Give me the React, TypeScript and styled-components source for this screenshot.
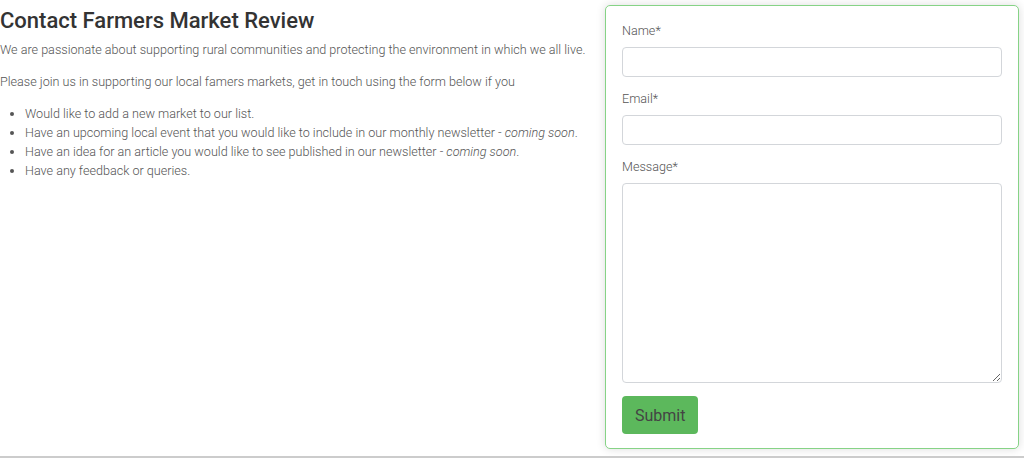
import styled, { createGlobalStyle } from "styled-components";

const GlobalStyle = createGlobalStyle`
    html, body {
        margin: 0;
        padding: 0;
        background: #ffffff;
    }
    body {
        font-family: Roboto, "Liberation Sans", Arial, sans-serif;
        font-weight: 300;
        color: #555555;
    }
`;

const Page = styled.div`
    width: 1024px;
    height: 458px;
    display: flex;
    flex-direction: column;
    overflow: hidden;
`;

const Row = styled.div`
    display: flex;
    height: 456px;
    padding: 5px 5px 0 0;
    box-sizing: border-box;
    gap: 10px;
`;

const Intro = styled.section`
    flex: 1;
    margin-top: -5px;
`;

const Heading = styled.h1`
    margin: 8px 0 6px;
    font-size: 22px;
    line-height: 1.2;
    font-weight: 500;
    color: #333333;
`;

const Text = styled.p`
    margin: 0 0 13px;
    font-size: 12.6px;
    line-height: 19px;
`;

const List = styled.ul`
    margin: 0;
    padding-left: 25px;
    font-size: 12.6px;
    line-height: 19px;
`;

const Card = styled.form`
    width: 414px;
    height: 444px;
    box-sizing: border-box;
    padding: 16px;
    border: 1px solid #86d386;
    border-radius: 5px;
    box-shadow: 0 0 10px rgba(0, 0, 0, 0.14);
    background: #ffffff;
`;

const Group = styled.div`
    margin-bottom: 13px;
`;

const Label = styled.label`
    display: block;
    margin: 0 0 7px;
    font-size: 12.6px;
    line-height: 18px;
    color: #555555;
`;

const Field = styled.input`
    display: block;
    width: 100%;
    height: 30px;
    box-sizing: border-box;
    border: 1px solid #d3d6da;
    border-radius: 4px;
    background: #ffffff;
    font: inherit;
`;

const Area = styled.textarea`
    display: block;
    width: 100%;
    height: 200px;
    box-sizing: border-box;
    border: 1px solid #d3d6da;
    border-radius: 4px;
    background: #ffffff;
    font: inherit;
    resize: vertical;
`;

const Submit = styled.button`
    height: 38px;
    padding: 0 13px;
    border: none;
    border-radius: 4px;
    background: #5cb85c;
    color: #444444;
    font-family: Roboto, "Liberation Sans", Arial, sans-serif;
    font-size: 16px;
    font-weight: 400;
`;

const Footer = styled.div`
    height: 2px;
    background: #cccccc;
`;

export default function App() {
    return (
        <Page>
            <GlobalStyle />
            <Row>
                <Intro>
                    <Heading>Contact Farmers Market Review</Heading>
                    <Text>
                        We are passionate about supporting rural communities and protecting the
                        environment in which we all live.
                    </Text>
                    <Text>
                        Please join us in supporting our local famers markets, get in touch using
                        the form below if you
                    </Text>
                    <List>
                        <li>Would like to add a new market to our list.</li>
                        <li>
                            Have an upcoming local event that you would like to include in our
                            monthly newsletter - <em>coming soon</em>.
                        </li>
                        <li>
                            Have an idea for an article you would like to see published in our
                            newsletter - <em>coming soon</em>.
                        </li>
                        <li>Have any feedback or queries.</li>
                    </List>
                </Intro>
                <Card onSubmit={(e) => e.preventDefault()}>
                    <Group>
                        <Label htmlFor="name">Name*</Label>
                        <Field id="name" type="text" />
                    </Group>
                    <Group>
                        <Label htmlFor="email">Email*</Label>
                        <Field id="email" type="email" />
                    </Group>
                    <Group>
                        <Label htmlFor="message">Message*</Label>
                        <Area id="message" />
                    </Group>
                    <Submit type="submit">Submit</Submit>
                </Card>
            </Row>
            <Footer />
        </Page>
    );
}
